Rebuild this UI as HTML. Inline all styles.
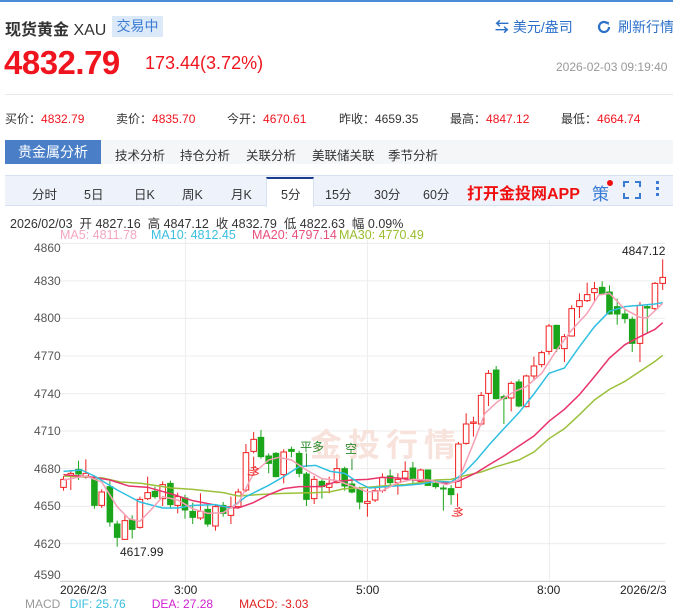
<!DOCTYPE html>
<html><head><meta charset="utf-8"><style>
*{margin:0;padding:0;box-sizing:border-box}
body{width:673px;height:599px;overflow:hidden;background:#fff;font-family:"Liberation Sans","Noto Sans CJK SC",sans-serif;position:relative;color:#333}
.a{position:absolute;white-space:nowrap}
.r{color:#f0141e}
</style></head><body>
<div class="a" style="left:0;top:0;width:673px;height:2px;background:#4a8ad8"></div>
<div class="a" style="left:5px;top:16px;font-size:16px;color:#333;font-weight:bold;letter-spacing:0">现货黄金 <span style="font-weight:normal">XAU</span></div>
<div class="a" style="left:112px;top:16px;width:51px;height:21px;background:#dce9f8;color:#3a7bd5;font-size:14px;line-height:21px;text-align:center">交易中</div>
<div class="a" style="left:495px;top:17px;font-size:14px;color:#2a6fc9"><span style="font-weight:bold">⇆</span> 美元/盎司</div>
<svg class="a" style="left:596px;top:19px" width="16" height="16" viewBox="0 0 16 16"><path d="M13 8a5 5 0 1 1-1.5-3.6" fill="none" stroke="#2a6fc9" stroke-width="2.2"/><path d="M9.5 2.5l3.5 0.5-0.5 3.5z" fill="#2a6fc9"/></svg>
<div class="a" style="left:618px;top:17px;font-size:14px;color:#2a6fc9">刷新行情</div>
<div class="a r" style="left:4px;top:44px;font-size:33px;font-weight:bold;letter-spacing:-0.5px">4832.79</div>
<div class="a r" style="left:145px;top:53px;font-size:18px">173.44(3.72%)</div>
<div class="a" style="left:556px;top:60px;font-size:12px;color:#999">2026-02-03 09:19:40</div>
<div class="a" style="left:5px;top:94px;width:668px;height:1px;background:#e8e8e8"></div>
<div class="a" style="left:5px;top:110px;font-size:12px">买价：<span class="r">4832.79</span></div>
<div class="a" style="left:116px;top:110px;font-size:12px">卖价：<span class="r">4835.70</span></div>
<div class="a" style="left:227px;top:110px;font-size:12px">今开：<span class="r">4670.61</span></div>
<div class="a" style="left:339px;top:110px;font-size:12px">昨收：4659.35</div>
<div class="a" style="left:450px;top:110px;font-size:12px">最高：<span class="r">4847.12</span></div>
<div class="a" style="left:561px;top:110px;font-size:12px">最低：<span class="r">4664.74</span></div>
<div class="a" style="left:5px;top:140px;width:668px;height:24px;background:#f5f6f8"></div>
<div class="a" style="left:5px;top:140px;width:96px;height:24px;background:#4a7fc8;color:#fff;font-size:14px;line-height:24px;text-align:center">贵金属分析</div>
<div class="a" style="left:115px;top:145px;font-size:12.5px">技术分析</div>
<div class="a" style="left:180px;top:145px;font-size:12.5px">持仓分析</div>
<div class="a" style="left:246px;top:145px;font-size:12.5px">关联分析</div>
<div class="a" style="left:312px;top:145px;font-size:12.5px">美联储关联</div>
<div class="a" style="left:388px;top:145px;font-size:12.5px">季节分析</div>
<div class="a" style="left:5px;top:175px;width:668px;height:31px;background:#eef3fb;border-top:1px solid #d6e2f2;border-bottom:1px solid #d6e2f2"></div>
<div class="a" style="left:266px;top:177px;width:48px;height:30px;background:#fff;border-top:2px solid #1a3d8f;border-left:1px solid #d6e2f2;border-right:1px solid #d6e2f2"></div>
<div class="a" style="left:0;top:184px;font-size:12.5px;width:673px">
<span class="a" style="left:32px">分时</span><span class="a" style="left:84px">5日</span><span class="a" style="left:134px">日K</span><span class="a" style="left:182px">周K</span><span class="a" style="left:231px">月K</span><span class="a" style="left:281px">5分</span><span class="a" style="left:325px">15分</span><span class="a" style="left:374px">30分</span><span class="a" style="left:423px">60分</span></div>
<div class="a" style="left:467px;top:180px;font-size:16px;font-weight:bold;color:#f01010">打开金投网APP</div>
<div class="a" style="left:592px;top:180px;font-size:17px;color:#3a7bd5">策</div>
<div class="a" style="left:607px;top:180px;width:6px;height:6px;border-radius:3px;background:#f01010"></div>
<svg class="a" style="left:623px;top:181px" width="18" height="18" viewBox="0 0 18 18"><path d="M1 6V1h5M12 1h5v5M17 12v5h-5M6 17H1v-5" fill="none" stroke="#3a7bd5" stroke-width="2"/></svg>
<div class="a" style="left:656px;top:181px;width:3px;height:3px;background:#3a7bd5;box-shadow:0 6px 0 #3a7bd5,0 12px 0 #3a7bd5"></div>
<div class="a" style="left:10px;top:213px;font-size:12.5px;color:#333">2026/02/03 &nbsp;开 4827.16 &nbsp;高 4847.12 &nbsp;收 4832.79 &nbsp;低 4822.63 &nbsp;幅 0.09%</div>
<div class="a" style="left:60px;top:228px;font-size:12.5px;color:#f4a6c0">MA5: 4811.78</div>
<div class="a" style="left:151px;top:228px;font-size:12.5px;color:#3bbfe0">MA10: 4812.45</div>
<div class="a" style="left:252px;top:228px;font-size:12.5px;color:#e8507c">MA20: 4797.14</div>
<div class="a" style="left:339px;top:228px;font-size:12.5px;color:#9bbd2f">MA30: 4770.49</div>
<svg id="ch" class="a" style="left:0;top:240px" width="673" height="359" viewBox="0 0 1568 1077" preserveAspectRatio="none"></svg>
<div id="lb"></div>
<div class="a" style="left:310px;top:420px;font-size:32px;font-weight:bold;color:#f8e2dc;letter-spacing:6px">金投行情</div>
<div class="a" style="left:300px;top:438px;font-size:12px;color:#2a8a2a">平多</div>
<div class="a" style="left:345px;top:440px;font-size:12px;color:#2a8a2a">空</div>
<div class="a" style="left:248px;top:463px;font-size:12px;color:#f02020;transform:rotate(20deg)">多</div>
<div class="a" style="left:452px;top:504px;font-size:12px;color:#f02020;transform:rotate(20deg)">多</div>
<div class="a" style="left:120px;top:545px;font-size:12px;color:#222">4617.99</div>
<div class="a" style="left:622px;top:244px;font-size:12px;color:#222">4847.12</div>
<div class="a" style="left:60px;top:583px;font-size:12px;color:#222">2026/2/3</div>
<div class="a" style="left:174px;top:583px;font-size:12px;color:#222">3:00</div>
<div class="a" style="left:356px;top:583px;font-size:12px;color:#222">5:00</div>
<div class="a" style="left:537px;top:583px;font-size:12px;color:#222">8:00</div>
<div class="a" style="left:620px;top:583px;font-size:12px;color:#222">2026/2/3</div>
<div class="a" style="left:25px;top:597px;font-size:12px;color:#999">MACD <span style="color:#3bbfe0;margin-left:6px">DIF: 25.76</span><span style="color:#d020d0;margin-left:26px">DEA: 27.28</span><span style="color:#e02020;margin-left:26px">MACD: -3.03</span></div>
<script>
var s=document.getElementById('ch'),h='';
var ys=[10,122.7,235,348,461,573,686,799,911,1024];
var lab=[4860,4830,4800,4770,4740,4710,4680,4650,4620,4590];
for(var i=0;i<ys.length;i++){h+='<line x1="140" x2="1550" y1="'+ys[i]+'" y2="'+ys[i]+'" stroke="#ececec" stroke-width="1" vector-effect="non-scaling-stroke"/>';}
[432,856,1280].forEach(function(x){h+='<line x1="'+x+'" x2="'+x+'" y1="0" y2="1024" stroke="#ececec" stroke-width="1" vector-effect="non-scaling-stroke"/>';});
h+='<line x1="140" x2="1550" y1="1024" y2="1024" stroke="#ccc" stroke-width="1" vector-effect="non-scaling-stroke"/>';
var c=[[148,718,742,708,752,1],[165,700,706,690,750,1],[183,688,702,662,720,0],[200,700,708,658,716,1],[220,718,796,712,806,0],[237,756,796,748,804,1],[256,740,846,722,860,0],[273,852,892,842,920,0],[291,842,898,822,900,1],[308,840,868,826,896,0],[326,778,862,770,866,1],[344,758,776,710,780,1],[361,754,770,740,776,0],[379,734,776,724,798,1],[397,730,794,722,806,0],[414,770,796,758,820,1],[431,774,810,764,836,0],[449,814,832,788,852,0],[467,814,834,760,840,1],[484,808,852,796,860,0],[502,800,858,794,872,1],[520,796,820,786,830,0],[538,800,826,770,852,1],[555,756,800,746,806,1],[573,638,750,612,756,1],[591,598,634,576,640,1],[608,592,650,570,656,0],[626,648,670,640,700,0],[643,640,710,636,712,0],[661,636,704,628,730,1],[679,628,634,620,652,0],[697,640,700,632,712,0],[714,702,778,696,798,0],[732,718,776,708,792,1],[750,724,740,718,776,0],[767,730,742,710,760,1],[785,686,728,644,730,1],[803,686,738,680,752,0],[820,732,756,716,760,0],[838,748,786,740,808,0],[856,784,790,746,830,1],[874,752,780,740,786,1],[891,712,752,700,758,1],[909,708,728,688,738,0],[927,718,728,700,764,1],[944,694,714,664,720,1],[962,684,720,666,730,0],[980,690,724,686,730,1],[997,690,736,688,738,0],[1015,730,740,720,746,0],[1033,744,747,736,812,0],[1051,746,764,736,794,0],[1068,612,742,606,744,1],[1086,552,610,520,614,1],[1103,546,550,530,590,1],[1121,466,552,456,556,1],[1138,400,460,390,498,1],[1156,390,476,378,478,0],[1174,470,476,464,552,0],[1191,430,474,424,514,1],[1209,426,498,418,502,0],[1226,408,500,404,502,1],[1244,378,408,350,420,1],[1262,338,374,332,382,1],[1279,258,334,252,344,1],[1297,256,326,254,336,0],[1315,290,326,282,366,1],[1332,206,288,196,290,1],[1350,182,200,160,234,1],[1368,164,182,128,186,1],[1385,146,158,126,186,1],[1403,142,162,124,164,0],[1420,156,222,136,224,0],[1438,200,222,176,254,0],[1456,222,236,208,250,0],[1473,238,310,230,336,0],[1491,196,310,186,366,1],[1508,200,204,196,280,0],[1526,130,206,126,212,1],[1544,112,130,58,150,1]];
c.forEach(function(k){var col=k[5]?'#f01f1f':'#1ba51b';
h+='<line x1="'+k[0]+'" x2="'+k[0]+'" y1="'+k[3]+'" y2="'+k[4]+'" stroke="'+col+'" stroke-width="1" vector-effect="non-scaling-stroke"/>';
h+='<rect x="'+(k[0]-6.5)+'" y="'+k[1]+'" width="13" height="'+Math.max(3,k[2]-k[1])+'" fill="'+(k[5]?'#fff':col)+'" stroke="'+col+'" stroke-width="1" vector-effect="non-scaling-stroke"/>';});
var ma=[['#9bc03a','148,708 240,714 280,726 330,730 400,744 449,748 520,758 555,768 600,764 661,760 735,758 767,756 803,746 838,744 874,740 909,736 944,734 980,728 1015,720 1051,718 1086,706 1121,696 1156,680 1209,660 1244,636 1279,596 1315,566 1350,524 1385,480 1420,448 1456,424 1491,394 1526,364 1544,346'],
['#e8336b','148,704 220,712 256,720 300,738 344,742 400,762 449,782 520,800 555,804 590,788 626,764 661,746 697,740 750,740 785,724 820,720 856,718 891,712 927,714 962,720 1000,722 1040,730 1068,724 1110,698 1140,674 1174,648 1209,618 1244,588 1279,544 1315,508 1350,464 1385,410 1420,354 1456,314 1491,290 1526,268 1544,248'],
['#30bfe0','148,694 190,690 220,708 273,750 326,786 379,804 414,804 449,796 502,794 538,804 573,770 626,736 661,710 697,680 735,676 770,694 803,700 838,730 860,744 900,740 944,736 980,732 1015,724 1051,726 1080,700 1110,660 1140,614 1174,566 1209,518 1244,462 1279,400 1315,384 1350,320 1385,260 1420,214 1456,200 1491,196 1526,192 1544,188'],
['#f5a0b5','148,720 200,708 237,726 273,800 300,836 326,844 350,812 379,770 414,780 449,806 484,820 520,818 555,790 591,700 626,660 650,652 679,660 714,690 750,716 785,722 820,738 856,756 891,752 927,728 962,718 1000,720 1040,734 1068,720 1100,620 1130,520 1160,484 1200,454 1226,440 1262,400 1297,330 1332,270 1368,220 1395,165 1420,160 1456,208 1491,232 1508,234 1544,190']];
ma.forEach(function(m){h+='<polyline points="'+m[1]+'" fill="none" stroke="'+m[0]+'" stroke-width="1.5" vector-effect="non-scaling-stroke"/>';});
h+='<line x1="714" x2="714" y1="640" y2="680" stroke="#2a8a2a" vector-effect="non-scaling-stroke"/><line x1="820" x2="820" y1="650" y2="690" stroke="#2a8a2a" vector-effect="non-scaling-stroke"/>';
h+='<line x1="591" x2="591" y1="650" y2="690" stroke="#f02020" vector-effect="non-scaling-stroke"/><line x1="1066" x2="1066" y1="760" y2="800" stroke="#f02020" vector-effect="non-scaling-stroke"/>';
s.innerHTML=h;
var lb='';for(var i=0;i<lab.length;i++){var y=240+ys[i]/3-7;if(i==0)y+=5;if(i==9)y-=6;lb+='<div class="a" style="left:34px;top:'+y+'px;font-size:12px;color:#555">'+lab[i]+'</div>';}
document.getElementById('lb').innerHTML=lb;
</script>
</body></html>
